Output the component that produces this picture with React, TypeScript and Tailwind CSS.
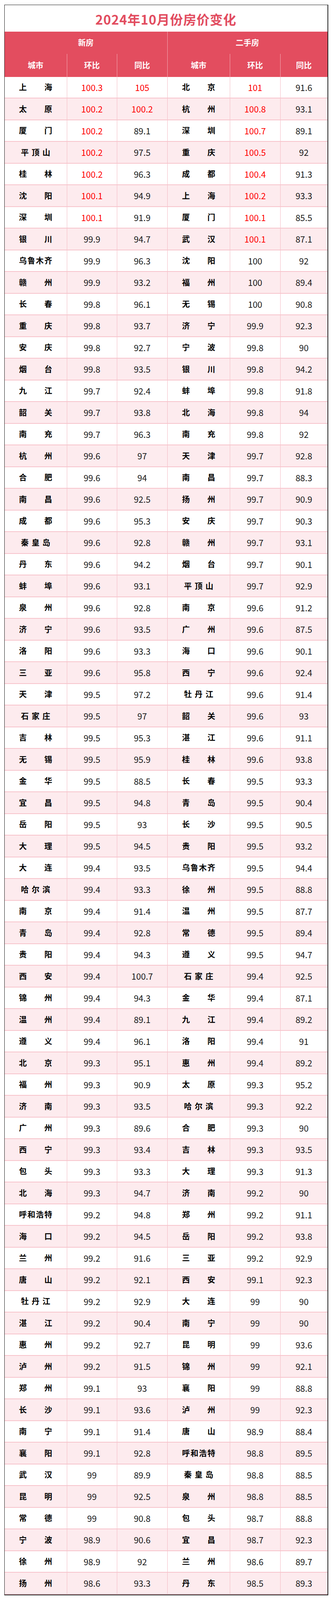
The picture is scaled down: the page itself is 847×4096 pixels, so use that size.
import React from "react";

type Row = [string, string, string, string, string, string];

const rows: Row[] = [
  ["上海", "100.3", "105", "北京", "101", "91.6"],
  ["太原", "100.2", "100.2", "杭州", "100.8", "93.1"],
  ["厦门", "100.2", "89.1", "深圳", "100.7", "89.1"],
  ["平顶山", "100.2", "97.5", "重庆", "100.5", "92"],
  ["桂林", "100.2", "96.3", "成都", "100.4", "91.3"],
  ["沈阳", "100.1", "94.9", "上海", "100.2", "93.3"],
  ["深圳", "100.1", "91.9", "厦门", "100.1", "85.5"],
  ["银川", "99.9", "94.7", "武汉", "100.1", "87.1"],
  ["乌鲁木齐", "99.9", "96.3", "沈阳", "100", "92"],
  ["赣州", "99.9", "93.2", "福州", "100", "89.4"],
  ["长春", "99.8", "96.1", "无锡", "100", "90.8"],
  ["重庆", "99.8", "93.7", "济宁", "99.9", "92.3"],
  ["安庆", "99.8", "92.7", "宁波", "99.8", "90"],
  ["烟台", "99.8", "93.5", "银川", "99.8", "94.2"],
  ["九江", "99.7", "92.4", "蚌埠", "99.8", "91.8"],
  ["韶关", "99.7", "93.8", "北海", "99.8", "94"],
  ["南充", "99.7", "96.3", "南充", "99.8", "92"],
  ["杭州", "99.6", "97", "天津", "99.7", "92.8"],
  ["合肥", "99.6", "94", "南昌", "99.7", "88.3"],
  ["南昌", "99.6", "92.5", "扬州", "99.7", "90.9"],
  ["成都", "99.6", "95.3", "安庆", "99.7", "90.3"],
  ["秦皇岛", "99.6", "92.8", "赣州", "99.7", "93.1"],
  ["丹东", "99.6", "94.2", "烟台", "99.7", "90.1"],
  ["蚌埠", "99.6", "93.1", "平顶山", "99.7", "92.9"],
  ["泉州", "99.6", "92.8", "南京", "99.6", "91.2"],
  ["济宁", "99.6", "93.5", "广州", "99.6", "87.5"],
  ["洛阳", "99.6", "93.3", "海口", "99.6", "90.1"],
  ["三亚", "99.6", "95.8", "西宁", "99.6", "92.4"],
  ["天津", "99.5", "97.2", "牡丹江", "99.6", "91.4"],
  ["石家庄", "99.5", "97", "韶关", "99.6", "93"],
  ["吉林", "99.5", "95.3", "湛江", "99.6", "91.1"],
  ["无锡", "99.5", "95.9", "桂林", "99.6", "93.8"],
  ["金华", "99.5", "88.5", "长春", "99.5", "93.3"],
  ["宜昌", "99.5", "94.8", "青岛", "99.5", "90.4"],
  ["岳阳", "99.5", "93", "长沙", "99.5", "90.5"],
  ["大理", "99.5", "94.5", "贵阳", "99.5", "93.2"],
  ["大连", "99.4", "93.5", "乌鲁木齐", "99.5", "94.4"],
  ["哈尔滨", "99.4", "93.3", "徐州", "99.5", "88.8"],
  ["南京", "99.4", "91.4", "温州", "99.5", "87.7"],
  ["青岛", "99.4", "92.8", "常德", "99.5", "89.4"],
  ["贵阳", "99.4", "94.3", "遵义", "99.5", "94.7"],
  ["西安", "99.4", "100.7", "石家庄", "99.4", "92.5"],
  ["锦州", "99.4", "94.3", "金华", "99.4", "87.1"],
  ["温州", "99.4", "89.1", "九江", "99.4", "89.2"],
  ["遵义", "99.4", "96.1", "洛阳", "99.4", "91"],
  ["北京", "99.3", "95.1", "惠州", "99.4", "89.2"],
  ["福州", "99.3", "90.9", "太原", "99.3", "95.2"],
  ["济南", "99.3", "93.5", "哈尔滨", "99.3", "92.2"],
  ["广州", "99.3", "89.6", "合肥", "99.3", "90"],
  ["西宁", "99.3", "93.4", "吉林", "99.3", "93.5"],
  ["包头", "99.3", "93.3", "大理", "99.3", "91.3"],
  ["北海", "99.3", "94.7", "济南", "99.2", "90"],
  ["呼和浩特", "99.2", "94.8", "郑州", "99.2", "91.1"],
  ["海口", "99.2", "94.5", "岳阳", "99.2", "93.8"],
  ["兰州", "99.2", "91.6", "三亚", "99.2", "92.9"],
  ["唐山", "99.2", "92.1", "西安", "99.1", "92.3"],
  ["牡丹江", "99.2", "92.9", "大连", "99", "90"],
  ["湛江", "99.2", "90.4", "南宁", "99", "90"],
  ["惠州", "99.2", "92.7", "昆明", "99", "93.6"],
  ["泸州", "99.2", "91.5", "锦州", "99", "92.1"],
  ["郑州", "99.1", "93", "襄阳", "99", "88.8"],
  ["长沙", "99.1", "93.6", "泸州", "99", "92.3"],
  ["南宁", "99.1", "91.4", "唐山", "98.9", "88.4"],
  ["襄阳", "99.1", "92.8", "呼和浩特", "98.8", "89.5"],
  ["武汉", "99", "89.9", "秦皇岛", "98.8", "88.5"],
  ["昆明", "99", "92.5", "泉州", "98.8", "88.5"],
  ["常德", "99", "90.8", "包头", "98.7", "88.8"],
  ["宁波", "98.9", "90.6", "宜昌", "98.7", "92.3"],
  ["徐州", "98.9", "92", "兰州", "98.6", "89.7"],
  ["扬州", "98.6", "93.3", "丹东", "98.5", "89.3"],
];

function City({ name }: { name: string }) {
  const chars = Array.from(name);
  const w = chars.length === 3 ? "w-[75px]" : "w-[85px]";
  return (
    <div className={"flex justify-between " + w}>
      {chars.map((c, i) => (
        <span key={i}>{c}</span>
      ))}
    </div>
  );
}

const cellBase = "flex items-center justify-center border-r border-[#f4b9c3]";
const cellLast = "flex items-center justify-center";

function Num({ v, red }: { v: string; red: boolean }) {
  return <span className={red ? "text-[#ff0000]" : "text-[#1a1a1a]"}>{v}</span>;
}

export default function App() {
  return (
    <div
      className="w-[847px] bg-white pb-[11px] pt-[11.5px]"
      style={{ fontFamily: '"Noto Sans CJK SC", "Noto Sans", sans-serif' }}
    >
      <div className="ml-[10.5px] w-[829px] border-t border-l border-r-2 border-b-2 border-[#1f1f1f] bg-white">
        <div className="flex h-[68.7px] items-center justify-center pt-[5px] text-[33px] font-bold tracking-[1px] text-[#e24c5f]">
          2024年10月份房价变化
        </div>
        <div className="bg-[#e34d5f] text-[20px] font-bold text-white">
          <div className="grid h-[56.4px] grid-cols-[417px_409px]">
            <div className="flex items-center justify-center border-r border-[#f3aab4]">新房</div>
            <div className="flex items-center justify-center">二手房</div>
          </div>
          <div className="grid h-[59.1px] grid-cols-[160px_128.5px_128.5px_160.5px_128.5px_120px]">
            <div className="flex items-center justify-center border-r border-[#f3aab4]">城市</div>
            <div className="flex items-center justify-center border-r border-[#f3aab4]">环比</div>
            <div className="flex items-center justify-center border-r border-[#f3aab4]">同比</div>
            <div className="flex items-center justify-center border-r border-[#f3aab4]">城市</div>
            <div className="flex items-center justify-center border-r border-[#f3aab4]">环比</div>
            <div className="flex items-center justify-center">同比</div>
          </div>
        </div>
        {rows.map((r, i) => (
          <div
            key={i}
            className={
              "grid h-[55.51px] grid-cols-[160px_128.5px_128.5px_160.5px_128.5px_120px] border-b-2 border-[#f7c3cb] " +
              (i % 2 === 1 ? "bg-[#fdebee]" : "bg-white")
            }
          >
            <div className={cellBase + " text-[20px] font-bold text-black"}>
              <City name={r[0]} />
            </div>
            <div className={cellBase + " text-[22px]"}>
              <Num v={r[1]} red={i < 7} />
            </div>
            <div className={cellBase + " text-[22px]"}>
              <Num v={r[2]} red={i < 2} />
            </div>
            <div className={cellBase + " text-[20px] font-bold text-black"}>
              <City name={r[3]} />
            </div>
            <div className={cellBase + " text-[22px]"}>
              <Num v={r[4]} red={i < 8} />
            </div>
            <div className={cellLast + " text-[22px]"}>
              <Num v={r[5]} red={false} />
            </div>
          </div>
        ))}
      </div>
    </div>
  );
}
